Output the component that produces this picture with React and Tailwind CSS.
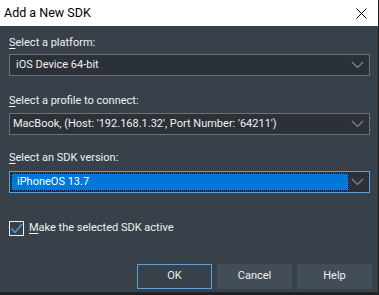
import React from 'react';

const font = { fontFamily: 'Roboto, "Noto Sans", sans-serif' };

function Chevron() {
    return (
        <svg width="13" height="8" viewBox="0 0 13 8" className="shrink-0">
            <path d="M1 1 L6.5 6.5 L12 1" fill="none" stroke="#858a90" strokeWidth="1.1" />
        </svg>
    );
}

function Select({ value, pl = 'pl-[6px]' }) {
    return (
        <div className="h-[22px] w-[361px] bg-[#2b3137] border border-[#6b7177] flex items-center">
            <span className={`flex-1 ${pl} text-[11px] text-[#f0f0f0] whitespace-nowrap`}>{value}</span>
            <div className="w-[20px] flex justify-center pr-[4px]"><Chevron /></div>
        </div>
    );
}

function Label({ first, rest }) {
    return (
        <div className="h-[16px] text-[11px] leading-[16px] text-[#f0f0f0]">
            <span className="underline underline-offset-2">{first}</span>{rest}
        </div>
    );
}

export default function App() {
    return (
        <div className="w-[379px] h-[295px] bg-[#1e1f22] overflow-hidden" style={font}>
            <div className="w-[378px] h-[293px] bg-[#38414a] flex flex-col border-b border-[#25292e]">
                <div className="h-[26px] bg-white flex items-center justify-between pl-[4px] pr-[11px]">
                    <span className="text-[12.5px] text-black">Add a New SDK</span>
                    <svg width="11" height="11" viewBox="0 0 11 11">
                        <path d="M0.5 0.5 L10.5 10.5 M10.5 0.5 L0.5 10.5" stroke="#000" strokeWidth="1" />
                    </svg>
                </div>

                <div className="flex flex-col pl-[9px] pt-[9px]">
                    <Label first="S" rest="elect a platform:" />
                    <div className="mt-[3px]"><Select value="iOS Device 64-bit" pl="pl-[6px]" /></div>

                    <div className="mt-[17px]"><Label first="S" rest="elect a profile to connect:" /></div>
                    <div className="mt-[4px]"><Select value="MacBook, (Host: '192.168.1.32', Port Number: '64211')" pl="pl-[3px]" /></div>

                    <div className="mt-[15px]"><Label first="S" rest="elect an SDK version:" /></div>
                    <div className="mt-[5px] h-[22px] w-[361px] bg-[#2b3137] border border-[#5ba0dc] flex items-center p-[1px]">
                        <div className="flex-1 h-full bg-[#0078d7] border border-dotted border-black flex items-center pl-[5px] text-[11px] text-white">
                            iPhoneOS 13.7
                        </div>
                        <div className="w-[19px] flex justify-center pr-[2px]"><Chevron /></div>
                    </div>

                    <div className="mt-[27px] flex items-center gap-[5px]">
                        <div className="w-[15px] h-[15px] border border-[#f0f0f0] flex items-center justify-center">
                            <svg width="13" height="11" viewBox="0 0 13 11">
                                <path d="M1.5 5.5 L5 9.5 L12 1" fill="none" stroke="#4d9ee0" strokeWidth="1.4" />
                            </svg>
                        </div>
                        <Label first="M" rest="ake the selected SDK active" />
                    </div>
                </div>

                <div className="flex justify-end gap-[5px] pr-[6px] mt-[28px]">
                    <button className="w-[75px] h-[25px] border border-[#5ba0dc] bg-[#38414a] text-[11px] text-[#f0f0f0]">OK</button>
                    <button className="w-[75px] h-[25px] bg-[#434d58] text-[11px] text-[#f0f0f0]">Cancel</button>
                    <button className="w-[75px] h-[25px] bg-[#434d58] text-[11px] text-[#f0f0f0]">Help</button>
                </div>
            </div>
        </div>
    );
}
